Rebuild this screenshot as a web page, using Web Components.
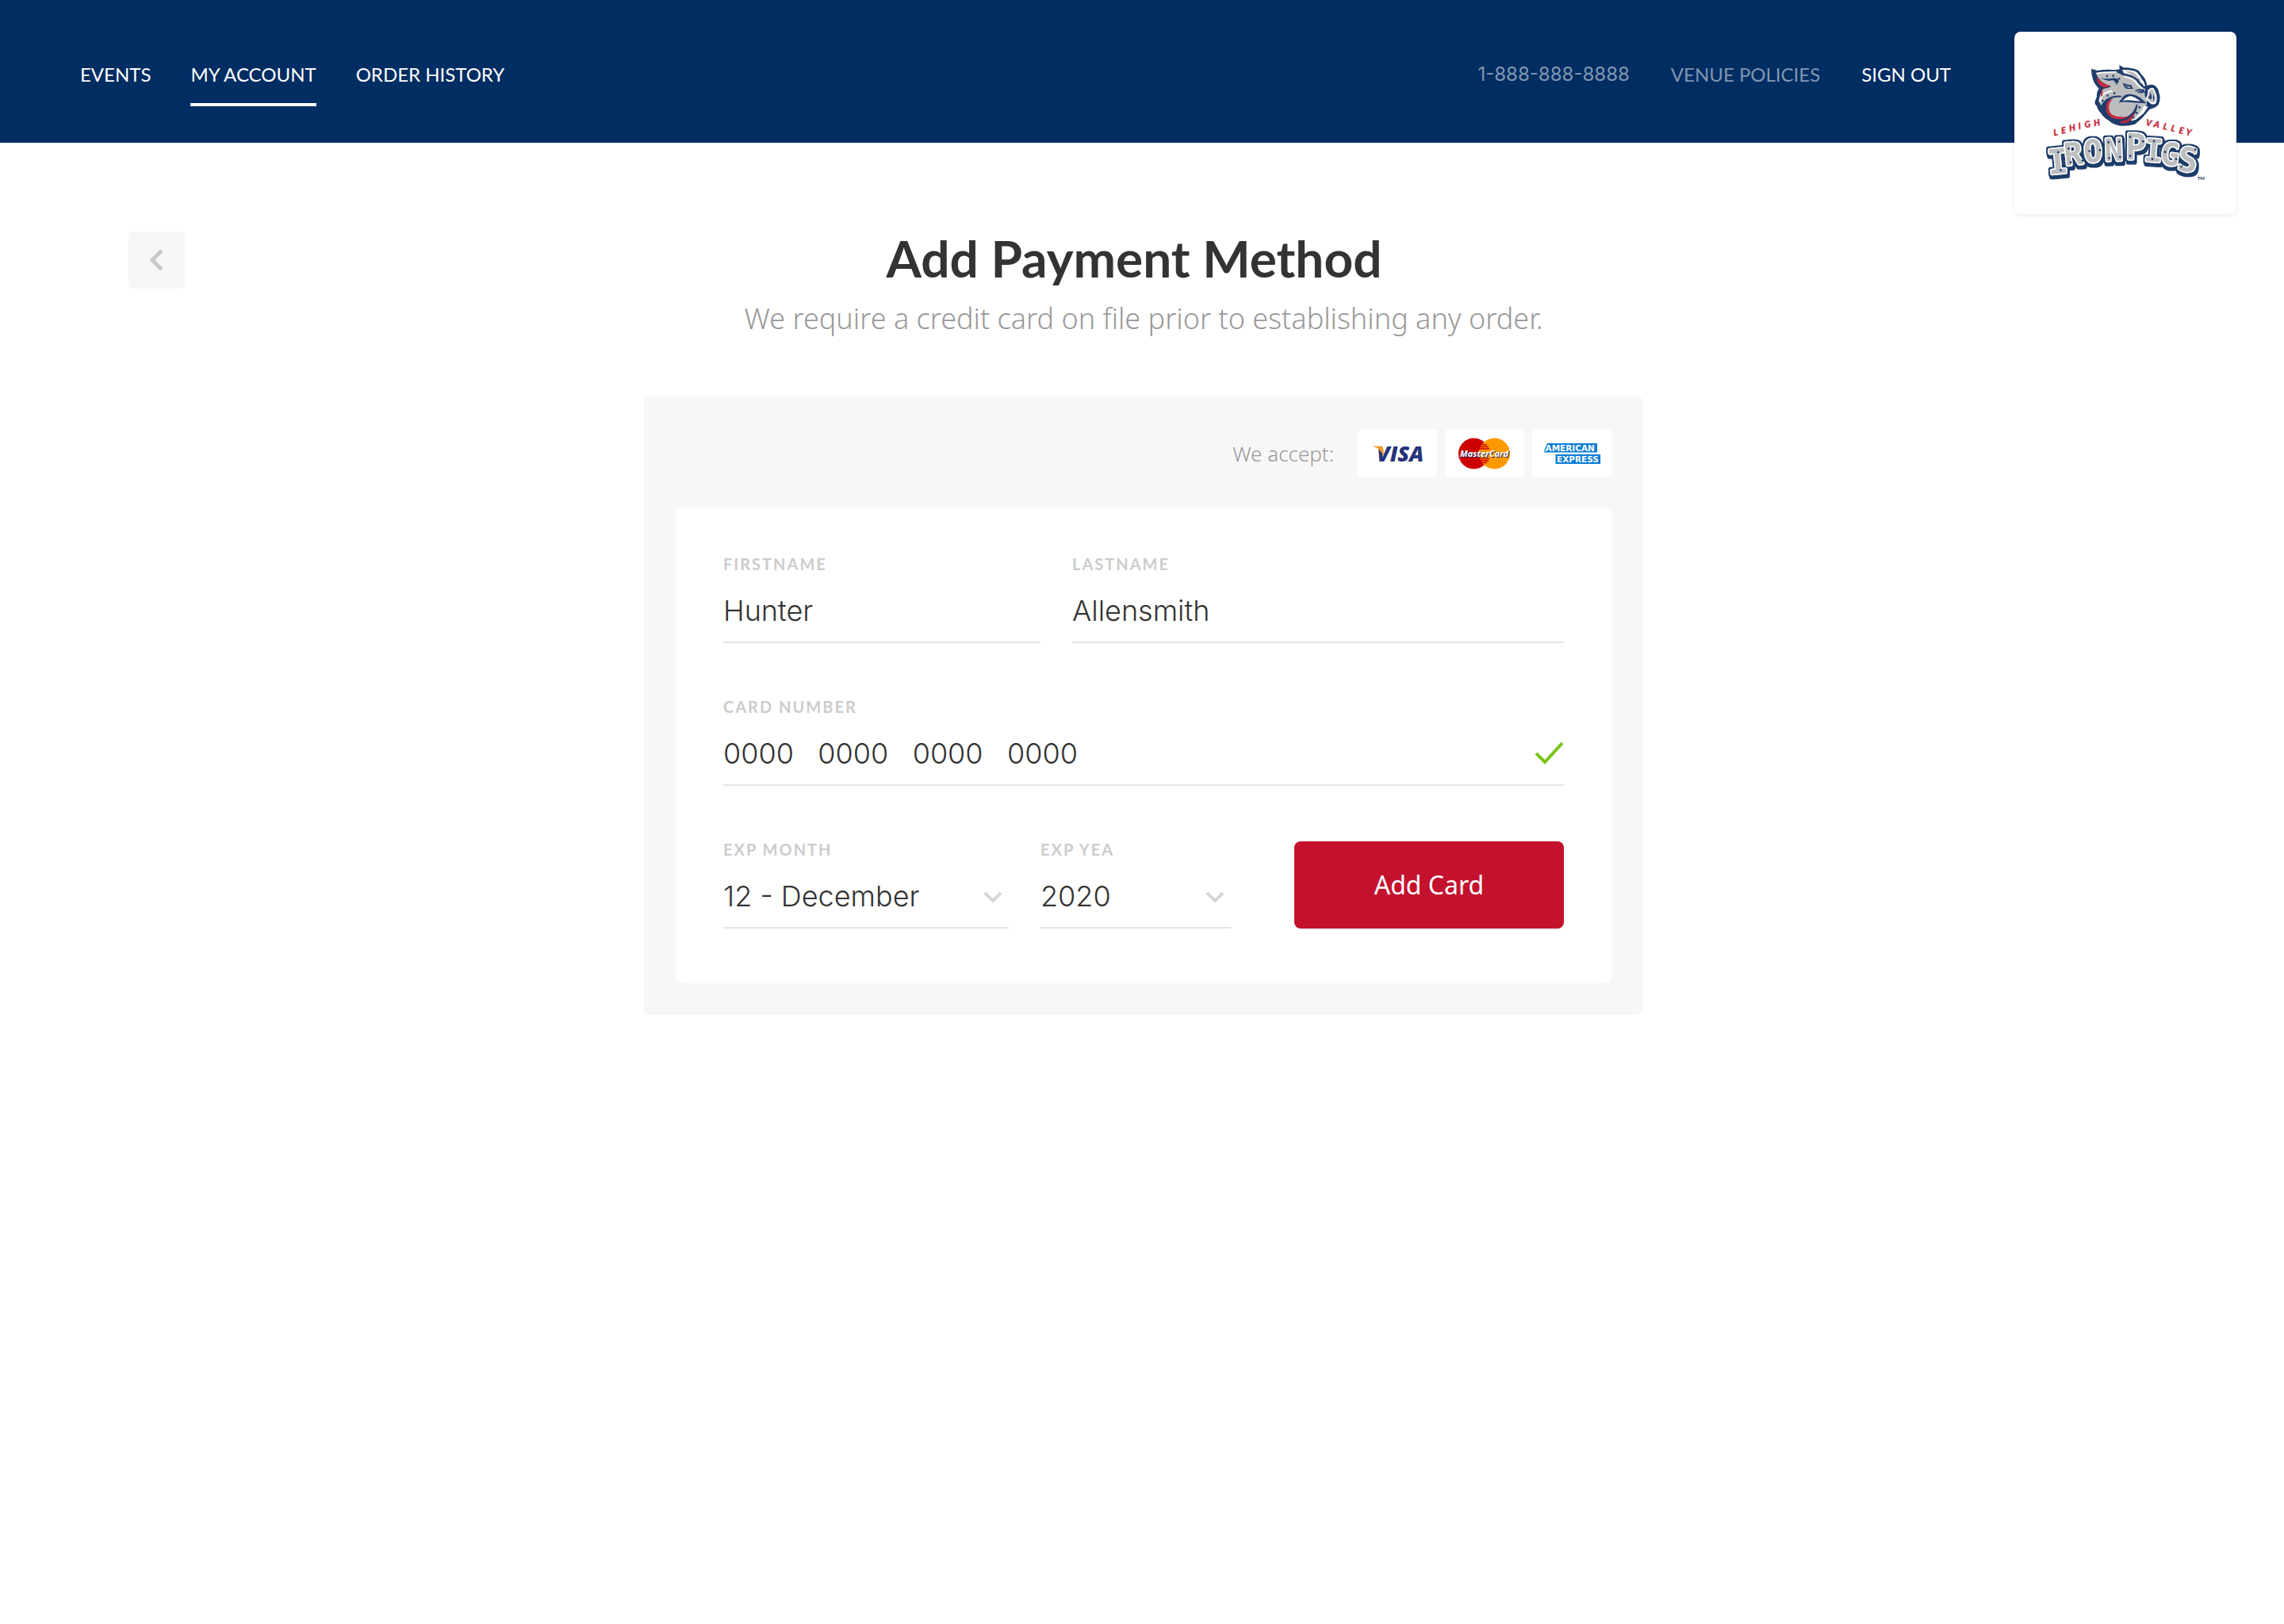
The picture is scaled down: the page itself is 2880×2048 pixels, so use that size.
<!DOCTYPE html>
<html lang="en">
<head>
<meta charset="utf-8">
<meta name="viewport" content="width=device-width, initial-scale=1">
<title>Add Payment Method</title>
<style>
  :root {
    --navy: #002d62;
    --red: #c4122e;
    --ink: #333;
    --muted: #999;
    --faint: #ccc;
    --rule: #e5e5e5;
    --panel: #f7f7f7;
    --caps: Lato, "Liberation Sans", sans-serif;
    --body: "Noto Sans", "Open Sans", sans-serif;
    --value: Inter, "Noto Sans", sans-serif;
  }
  html, body { margin: 0; min-height: 100%; background: #fff; }
  body { font-family: var(--body); color: var(--ink); }
</style>
</head>
<body>
<payment-page></payment-page>

<script>
const define = (name, html, setup) => {
  const template = document.createElement('template');
  template.innerHTML = html;
  customElements.define(name, class extends HTMLElement {
    constructor() {
      super();
      this.attachShadow({ mode: 'open' }).append(template.content.cloneNode(true));
    }
    connectedCallback() { if (setup) setup(this, this.shadowRoot); }
  });
};

define('nav-link', `
<style>
  :host { display: block; }
  a {
    display: block; padding: 32px 0 20px; border-bottom: 4px solid transparent;
    font: 400 24px/32px var(--caps); color: #fff; text-decoration: none; white-space: nowrap;
  }
  :host([current]) a { border-color: #fff; }
  :host([quiet]) a { color: #8096b1; }
  :host([numeric]) a { font-family: var(--value); }
</style>
<a href="#"><slot></slot></a>`, (el, root) => {
  const a = root.querySelector('a');
  a.href = el.getAttribute('href') || '#';
  if (el.hasAttribute('current')) a.setAttribute('aria-current', 'page');
});

define('team-logo', `
<style>
  :host { display: block; width: 280px; background: #fff; border-radius: 8px; box-shadow: 0 2px 6px rgba(0,0,0,.08); }
  svg { display: block; width: 100%; }
</style>
<svg viewBox="60 60 840 690" role="img" aria-label="Lehigh Valley IronPigs">
  <defs>
    <filter id="block" x="-10%" y="-20%" width="120%" height="150%">
      <feMorphology in="SourceAlpha" operator="dilate" radius="7" result="fat"/>
      <feOffset in="fat" dx="2" dy="5" result="d1"/>
      <feOffset in="fat" dx="4" dy="10" result="d2"/>
      <feMerge result="stack"><feMergeNode in="fat"/><feMergeNode in="d1"/><feMergeNode in="d2"/></feMerge>
      <feFlood flood-color="#1f3c6b"/>
      <feComposite in2="stack" operator="in" result="navy"/>
      <feMerge><feMergeNode in="navy"/><feMergeNode in="SourceGraphic"/></feMerge>
    </filter>
  </defs>
  <!-- head silhouette -->
  <path fill="#1f3c6b" d="M351 200 L374 207 Q412 201 440 205 L458 202 L457 186 L474 196 Q506 195 530 207 Q540 222 549 231 Q558 242 562 264 Q578 256 592 264 Q606 276 606 288 Q613 306 610 318 Q608 334 600 341 Q588 351 572 353 L558 370 Q546 385 537 392 L516 410 Q490 418 462 416 Q432 410 420 398 Q396 384 388 369 Q374 354 372 341 Q362 332 365 323 L372 305 Q370 290 380 275 Q362 258 357 240 Q351 222 351 200Z"/>
  <!-- cheek and brow -->
  <path fill="#bbbdbf" d="M368 217 Q415 212 452 215 L464 221 L481 216 Q512 225 530 245 L547 270 L556 277 L553 300 L562 322 L560 338 L538 360 L510 383 Q528 352 525 333 Q505 385 462 387 Q414 386 408 352 Q407 318 440 306 Q404 306 388 340 L379 322 Q381 300 392 287 Q395 275 399 275 Q412 275 426 266 Q384 258 368 217Z"/>
  <path fill="#fff" d="M468 204 Q505 203 522 212 Q536 226 540 236 Q552 248 555 264 L549 271 Q532 240 510 230 Q488 218 474 217Z"/>
  <path fill="#bbbdbf" d="M478 209 Q506 208 518 218 Q534 236 547 262 Q528 238 508 226Z"/>
  <path fill="none" stroke="#1f3c6b" stroke-width="7" d="M466 220 Q505 224 524 242 Q540 268 560 274"/>
  <path fill="none" stroke="#fff" stroke-width="5" d="M370 218 Q400 212 448 213 M474 231 Q502 233 518 250 Q528 265 545 277 M383 326 Q388 290 430 284"/>
  <!-- ear -->
  <path fill="#c8283c" d="M371 232 Q392 258 424 264 Q412 272 396 270 Q374 262 371 232Z"/>
  <path fill="#1f3c6b" d="M384 234 Q412 248 428 244 Q438 242 440 250 Q446 254 446 262 L455 248 Q454 234 430 236 Q406 240 384 234Z"/>
  <path fill="#c8283c" d="M390 279 L394 276 Q392 290 394 302 L388 306 Q386 292 390 279Z"/>
  <!-- eye -->
  <path fill="#1f3c6b" d="M470 254 Q492 262 501 261 L510 276 L484 276 Q473 268 470 254Z"/>
  <path fill="#bbbdbf" d="M479 262 L496 267 L501 272 L487 272Z"/>
  <circle cx="488" cy="267" r="3" fill="#1f3c6b"/>
  <path fill="none" stroke="#1f3c6b" stroke-width="5" d="M518 284 Q532 276 552 282 M526 290 Q540 282 558 290 M538 292 L550 286"/>
  <!-- mouth -->
  <path fill="#1f3c6b" d="M455 328 L474 302 Q486 295 504 297 Q526 300 546 318 L560 331 Q528 330 500 327 Q474 324 455 328Z"/>
  <path fill="#fff" d="M470 321 Q484 304 502 304 Q520 308 538 323 L506 320 Q488 317 470 321Z"/>
  <!-- snout -->
  <path fill="#fff" d="M565 281 Q578 267 588 275 Q595 290 598 300 Q602 316 596 330 Q588 338 576 332 L556 314 Q566 298 565 281Z"/>
  <path fill="#bbbdbf" d="M569 286 Q580 272 586 282 Q595 304 595 318 Q590 331 578 327 L560 312 Q570 298 569 286Z"/>
  <path fill="#1f3c6b" d="M572 288 Q582 300 578 316 Q570 314 567 308 Q575 302 572 288Z M587 296 Q592 308 588 322 Q582 314 587 296Z"/>
  <!-- jaw -->
  <path fill="#fff" d="M545 338 L566 344 L548 370 L520 392 L500 398 Q520 380 528 358Z"/>
  <path fill="#bbbdbf" d="M530 334 L550 340 Q542 364 516 388 Q504 394 500 392 Q524 370 530 334Z"/>
  <path fill="#c8283c" d="M436 312 Q406 320 407 350 Q412 392 462 391 Q482 390 494 378 Q480 384 462 382 Q420 380 418 350 Q416 324 436 312Z M456 402 Q492 396 518 356 Q510 400 474 406 Q462 406 456 402Z"/>
  <path fill="none" stroke="#1f3c6b" stroke-width="6" d="M464 305 Q420 302 402 328 Q394 352 412 378 M524 336 Q516 372 480 394"/>
  <g fill="#1f3c6b">
    <circle cx="411" cy="228" r="4"/><circle cx="434" cy="227" r="4"/><circle cx="456" cy="238" r="4"/>
    <circle cx="529" cy="243" r="3"/><circle cx="541" cy="260" r="4"/>
    <circle cx="394" cy="321" r="4"/><circle cx="413" cy="302" r="4"/><circle cx="438" cy="293" r="4"/>
    <circle cx="533" cy="346" r="4"/><circle cx="523" cy="367" r="4"/><circle cx="510" cy="385" r="4"/>
  </g>
  <!-- wordmark -->
  <g font-family="Lato, sans-serif" font-weight="900" font-style="italic" font-size="33" fill="#c8283c" stroke="#c8283c" stroke-width="1">
    <text x="210 239 269 304 328 362" y="454 446 437 429 424 418" rotate="-10">LEHIGH</text>
    <text x="556 586 621 651 681 707" y="414 420 428 436 443 450" rotate="11">VALLEY</text>
  </g>
  <g filter="url(#block)">
    <text font-family="'DejaVu Sans Mono', monospace" font-weight="700" fill="#bbbdbf" stroke="#fff" stroke-width="9" stroke-linejoin="bevel" paint-order="stroke"
      x="190 252 325 402 480 548 609 672" y="601 567 556 550 542 549 560 582" rotate="-6 -6 -4 -2 0 4 7 9"><tspan font-size="130">I</tspan><tspan font-size="118">RON</tspan><tspan font-size="132">P</tspan><tspan font-size="118">IG</tspan><tspan font-size="126">S</tspan></text>
  </g>
  <g fill="#1f3c6b">
    <circle cx="226" cy="516" r="4"/><circle cx="235" cy="584" r="4"/>
    <circle cx="266" cy="502" r="4"/><circle cx="273" cy="554" r="4"/><circle cx="318" cy="548" r="4"/>
    <circle cx="344" cy="512" r="4"/><circle cx="384" cy="508" r="4"/>
    <circle cx="416" cy="478" r="4"/><circle cx="419" cy="538" r="4"/><circle cx="457" cy="476" r="4"/><circle cx="460" cy="534" r="4"/>
    <circle cx="498" cy="458" r="4"/><circle cx="498" cy="530" r="4"/><circle cx="547" cy="475" r="4"/>
    <circle cx="588" cy="474" r="4"/><circle cx="582" cy="542" r="4"/>
    <circle cx="630" cy="515" r="4"/><circle cx="672" cy="542" r="4"/>
    <circle cx="692" cy="570" r="4"/><circle cx="745" cy="506" r="4"/>
  </g>
  <text x="752" y="622" font-family="Lato, sans-serif" font-weight="900" font-size="18" fill="#1f3c6b">TM</text>
</svg>`);

define('site-header', `
<style>
  :host { display: block; background: var(--navy); }
  header { display: flex; align-items: center; height: 180px; padding: 0 60px 0 101px; }
  nav { display: flex; gap: 50px; }
  .account { gap: 52px; margin-left: auto; margin-right: 80px; }
  team-logo { align-self: flex-start; margin-top: 40px; }
</style>
<header>
  <nav aria-label="Main">
    <nav-link href="#events">EVENTS</nav-link>
    <nav-link href="#account" current>MY ACCOUNT</nav-link>
    <nav-link href="#orders">ORDER HISTORY</nav-link>
  </nav>
  <nav class="account" aria-label="Account">
    <nav-link href="tel:18888888888" quiet numeric>1-888-888-8888</nav-link>
    <nav-link href="#policies" quiet>VENUE POLICIES</nav-link>
    <nav-link href="#signout">SIGN OUT</nav-link>
  </nav>
  <team-logo></team-logo>
</header>`);

define('back-button', `
<style>
  :host { display: block; }
  button { display: grid; place-items: center; width: 72px; height: 72px; padding: 0; border: 0; border-radius: 6px; background: var(--panel); }
  svg { display: block; }
</style>
<button type="button" aria-label="Back">
  <svg width="20" height="28" viewBox="0 0 20 28" fill="none" stroke="#c8c8c8" stroke-width="5"><path d="M16 2 L4 14 L16 26"/></svg>
</button>`);

define('page-heading', `
<style>
  :host { display: block; text-align: center; }
  h1 { margin: 0; padding-right: 24px; font: 700 64px/68px var(--caps); color: var(--ink); }
  p { margin: 18px 0 0; font: 300 36px/48px var(--body); color: var(--muted); }
</style>
<h1><slot name="title"></slot></h1>
<p><slot></slot></p>`);

define('card-brands', `
<style>
  :host { display: flex; justify-content: flex-end; align-items: center; gap: 30px; }
  span { font: 300 26px/36px var(--body); color: var(--muted); }
  ul { display: flex; gap: 10px; margin: 0; padding: 0; list-style: none; }
  li { width: 100px; height: 60px; border-radius: 4px; background: #fff; overflow: hidden; }
  svg { display: block; width: 100%; }
</style>
<span>We accept:</span>
<ul>
  <li><svg viewBox="0 0 100 60" role="img" aria-label="Visa">
    <text x="24" y="40" font-family="'Open Sans', sans-serif" font-weight="800" font-style="italic" font-size="27" fill="#26337a">VISA</text>
    <path fill="#f0a030" d="M19 20.500 H29 Q32 21 32.500 25 L33 34 Q29 24 19 20.500Z"/>
  </svg></li>
  <li><svg viewBox="0 0 100 60" role="img" aria-label="MasterCard">
    <circle cx="36.500" cy="30" r="19.500" fill="#c00"/>
    <circle cx="62.500" cy="30" r="19.500" fill="#f90"/>
    <path stroke="#c00" stroke-width="1.300" d="M47 19 H53 M45 21.500 H55 M44 24 H56 M43 36.500 H56 M44 39 H55 M46 41.500 H53"/>
    <text x="19" y="34" font-family="'Open Sans', sans-serif" font-weight="700" font-style="italic" font-size="11" fill="#fff" style="text-shadow:1px 1px 0 #1a2a6c">MasterCard</text>
  </svg></li>
  <li><svg viewBox="0 0 100 60" role="img" aria-label="American Express">
    <path fill="#0a7dd6" d="M19 17 H82 V28.500 H15.500 V25Z M29.500 31 H86 V43 H29.500Z"/>
    <g font-family="'DejaVu Sans', sans-serif" font-weight="700" font-size="10.500" fill="#fff">
      <text x="16.500" y="26.700">AMERICAN</text>
      <text x="31" y="41">EXPRESS</text>
    </g>
  </svg></li>
</ul>`);

const fieldStyles = `
  :host { display: block; min-width: 0; }
  label { display: block; font: 700 20px/28px var(--caps); letter-spacing: 2px; color: var(--faint); }
  .control { display: grid; align-items: center; }
  .control > * { grid-area: 1 / 1; }
  input, select {
    box-sizing: border-box; width: 100%; height: 86px; margin: 0; padding: 6px 0 0;
    border: 0; border-bottom: 2px solid var(--rule); border-radius: 0; background: none;
    appearance: none; outline: none; font: 300 36px var(--value); color: var(--ink);
  }
  svg { justify-self: end; pointer-events: none; }`;

define('text-field', `
<style>${fieldStyles}
  svg { display: none; margin-top: 4px; }
  :host([valid]) svg { display: block; }
</style>
<label for="control"></label>
<div class="control">
  <input id="control" type="text">
  <svg width="38" height="32" viewBox="0 0 38 32" fill="none" stroke="#7ac414" stroke-width="4"><path d="M3 16 L14 27 L36 3"/></svg>
</div>`, (el, root) => {
  root.querySelector('label').textContent = el.getAttribute('label');
  root.querySelector('input').value = el.getAttribute('value');
});

define('select-field', `
<style>${fieldStyles}
  svg { margin-right: 8px; margin-top: 8px; }
</style>
<label for="control"></label>
<div class="control">
  <select id="control"></select>
  <svg width="24" height="16" viewBox="0 0 24 16" fill="none" stroke="#d6d6d6" stroke-width="4"><path d="M2 2 L12 12 L22 2"/></svg>
</div>`, (el, root) => {
  root.querySelector('label').textContent = el.getAttribute('label');
  root.querySelector('select').add(new Option(el.getAttribute('value'), el.getAttribute('value'), true, true));
});

define('primary-button', `
<style>
  :host { display: block; }
  button { display: block; width: 100%; height: 110px; border: 0; border-radius: 8px; background: var(--red); color: #fff; font: 400 32px/40px var(--body); }
</style>
<button type="submit"><slot></slot></button>`);

define('payment-form', `
<style>
  :host { display: block; box-sizing: border-box; padding: 42px 40px 40px; border-radius: 8px; background: var(--panel); }
  form { display: grid; gap: 66px; margin: 38px 0 0; padding: 57px 60px 69px; border-radius: 8px; background: #fff; }
  .row { display: grid; column-gap: 40px; align-items: end; }
  .names { grid-template-columns: 400fr 620fr; }
  .expiry { grid-template-columns: 360fr 240fr 380fr; }
  primary-button { padding-left: 40px; }
</style>
<card-brands></card-brands>
<form>
  <div class="row names">
    <text-field label="FIRSTNAME" value="Hunter"></text-field>
    <text-field label="LASTNAME" value="Allensmith"></text-field>
  </div>
  <div class="row">
    <text-field label="CARD NUMBER" value="0000   0000   0000   0000" valid></text-field>
  </div>
  <div class="row expiry">
    <select-field label="EXP MONTH" value="12 - December"></select-field>
    <select-field label="EXP YEA" value="2020"></select-field>
    <primary-button>Add Card</primary-button>
  </div>
</form>`);

define('payment-page', `
<style>
  :host { display: block; }
  main { display: grid; grid-template-columns: 72px 1fr 72px; align-items: start; row-gap: 74px; padding: 112px 158px 112px 162px; }
  payment-form { grid-column: 1 / -1; justify-self: center; width: min(1260px, 100%); }
</style>
<site-header></site-header>
<main>
  <back-button></back-button>
  <page-heading>
    <span slot="title">Add Payment Method</span>
    We require a credit card on file prior to establishing any order.
  </page-heading>
  <payment-form></payment-form>
</main>`);
</script>
</body>
</html>
